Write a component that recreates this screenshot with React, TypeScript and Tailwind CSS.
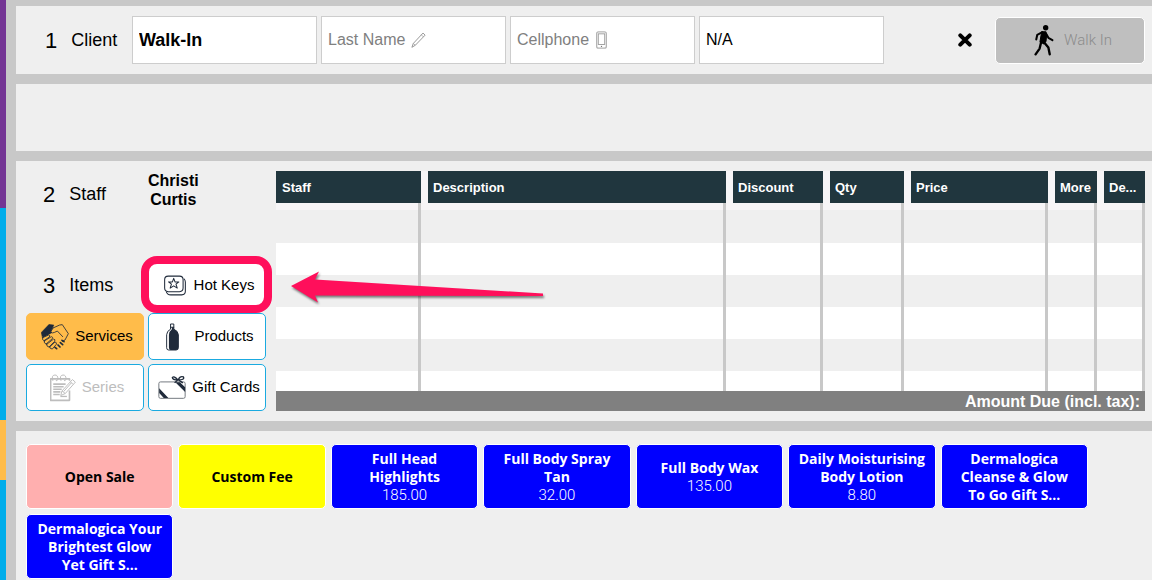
import React from "react";

type IconProps = { className?: string };

const PencilIcon = ({ className }: IconProps) => (
  <svg className={className} viewBox="0 0 42 46" fill="none" stroke="#8a8a8a" strokeWidth="2.5" strokeLinejoin="round">
    <path d="M2 44 6 33 34 3l6 6L12 38Z" />
    <path d="M6 33l6 5M29 8l6 6" strokeWidth="1.8" />
  </svg>
);

const PhoneIcon = ({ className }: IconProps) => (
  <svg className={className} viewBox="0 0 34 54" fill="none">
    <rect x="2" y="2" width="30" height="50" rx="6" stroke="#b4b4b4" strokeWidth="4" />
    <rect x="7" y="8" width="20" height="33" stroke="#8f8f8f" strokeWidth="2.5" />
    <circle cx="17" cy="47" r="2" fill="#777" />
  </svg>
);

const WalkIcon = ({ className }: IconProps) => (
  <svg className={className} viewBox="0 0 58 92" fill="none" stroke="#000" strokeLinecap="round" strokeLinejoin="round">
    <circle cx="34" cy="8" r="8" fill="#000" stroke="none" />
    <path d="M22 20h12l3 8-2 20-7 8-11-6 3-18Z" fill="#000" strokeWidth="3" />
    <path d="M24 21 9 29 6 43" strokeWidth="6" />
    <path d="M35 25l7 13 12 7" strokeWidth="6" />
    <path d="M21 49 16 70 4 87" strokeWidth="7" />
    <path d="M29 51l13 16 4 20" strokeWidth="7" />
  </svg>
);

const HotKeysIcon = ({ className }: IconProps) => (
  <svg className={className} viewBox="0 0 68 62" fill="none" stroke="#1f2a3a" strokeWidth="3.2" strokeLinejoin="round">
    <rect x="2" y="2" width="57" height="48" rx="11" />
    <path d="M61 10q5 4 5 10v29q0 11-11 11H21q-11 0-14-10" />
    <path d="M30 9l4 11h12l-9 7 4 12-11-7-11 7 4-12-9-7h12Z" />
  </svg>
);

const HandshakeIcon = ({ className }: IconProps) => (
  <svg className={className} viewBox="0 0 84 78" fill="none" stroke="#1f2a3a" strokeWidth="2.5" strokeLinejoin="round" strokeLinecap="round">
    <path d="M0 26 24 1l15 2-10 20 4 3-14 8-14 7Z" fill="#1f2a3a" strokeWidth="1" />
    <path d="M36 12 56 3l8-1 18 27-10 19-8 4" />
    <path d="M36 12 29 24q5 5 12 1l8-4 16 17" />
    <path d="M5 41 23 33q6 1 2 6L9 50q-7-2-4-9Z" fill="#ffbc4a" />
    <path d="M10 51 31 38q6 1 3 6L15 60q-7-2-5-9Z" fill="#ffbc4a" />
    <path d="M17 61 38 45q6 1 3 7L24 69q-8-1-7-8Z" fill="#ffbc4a" />
    <path d="M26 69 42 54q6 1 4 7L34 75q-8 0-8-6Z" fill="#ffbc4a" />
    <path d="M42 70l5 4M51 63l6 6M58 56l7 6M63 49l6 4" strokeWidth="5" />
  </svg>
);

const BottleIcon = ({ className }: IconProps) => (
  <svg className={className} viewBox="0 0 40 84" fill="none" stroke="#1f2a3a" strokeWidth="3">
    <path d="M14 2h10v16q13 5 14 17v40q0 7-7 7H8q-6 0-6-7V35q1-12 12-17Z" fill="#fff" />
    <path d="M18 12h6v6q13 5 14 17v40q0 7-7 7H14q-5-1-5-7V35q1-11 9-17Z" fill="#1f2a3a" stroke="none" />
    <path d="M13 12h12" />
  </svg>
);

const NotesIcon = ({ className }: IconProps) => (
  <svg className={className} viewBox="0 0 80 84" fill="none" stroke="#bdbdbd" strokeWidth="3" strokeLinejoin="round">
    <path d="M60 50v30H2V14h58v6" strokeWidth="5" />
    <path d="M9 20q-6-17 6-18 10 0 9 13-2 7-6 4M34 20q-6-17 6-18 10 0 9 13-2 7-6 4" />
    <path d="M10 30h38M10 38h32M10 46h26M10 54h22M10 62h20" strokeWidth="5" />
    <path d="M69 16l9 8-31 35-14 6 4-14Z" fill="#fff" />
    <path d="M63 23l8 8M37 51l10 8M42 53l24-27" />
    <path d="M32 68h20" strokeWidth="4" />
  </svg>
);

const GiftCardIcon = ({ className }: IconProps) => (
  <svg className={className} viewBox="0 0 84 70" fill="none">
    <rect x="2" y="18" width="80" height="50" rx="5" stroke="#74797f" strokeWidth="3" />
    <path d="M3 37v15l14 15h14ZM52 19h14l16 15v15Z" fill="#1f2a3a" />
    <path d="M60 12Q44 12 43 5q5-7 17 7ZM61 12q4-13 16-9 4 9-16 9Z" stroke="#1f2a3a" strokeWidth="4" />
    <path d="M59 12l-9 9M62 12l13 9" stroke="#1f2a3a" strokeWidth="4" />
  </svg>
);

const columns = [
  { label: "Staff", width: "w-[145px]" },
  { label: "Description", width: "" },
  { label: "Discount", width: "w-[97px]" },
  { label: "Qty", width: "w-[81px]" },
  { label: "Price", width: "w-[144px]" },
  { label: "More", width: "w-[49px]" },
  { label: "De...", width: "w-[48px]" },
];

// striped empty rows, the last one is cut off by the total bar
const rows = [
  "h-[7px] bg-[#f6f5f7]",
  "h-[33px] bg-[#efefef]",
  "h-8 bg-white",
  "h-8 bg-[#efefef]",
  "h-8 bg-white",
  "h-8 bg-[#efefef]",
  "h-5 bg-white",
];

const hotKeys = [
  { name: "Open Sale", color: "bg-[#ffafaf] text-black" },
  { name: "Custom Fee", color: "bg-[#ffff00] text-black" },
  { name: "Full Head\nHighlights", price: "185.00", color: "bg-[#0000ff] text-white" },
  { name: "Full Body Spray\nTan", price: "32.00", color: "bg-[#0000ff] text-white" },
  { name: "Full Body Wax", price: "135.00", color: "bg-[#0000ff] text-white" },
  { name: "Daily Moisturising\nBody Lotion", price: "8.80", color: "bg-[#0000ff] text-white" },
  { name: "Dermalogica\nCleanse & Glow\nTo Go Gift S...", color: "bg-[#0000ff] text-white" },
  { name: "Dermalogica Your\nBrightest Glow\nYet Gift S...", color: "bg-[#0000ff] text-white" },
];

const field = "h-12 w-full min-w-0 border border-[#cdcdcd] bg-white px-1.5 outline-none";
const itemButton = "flex h-[47px] w-full items-center justify-center rounded-[5px] border pl-1 text-[15px]";

function StepLabel({ step, text }: { step: number; text: string }) {
  return (
    <div className="flex items-center gap-3.5 pl-[17px]">
      <span className="text-[22px]">{step}</span>
      <span className="text-lg">{text}</span>
    </div>
  );
}

function ClientBar() {
  return (
    <section className="flex h-[68px] items-center bg-[#efefef]">
      <div className="flex w-[116px] shrink-0 items-center gap-3.5 pl-[29px]">
        <span className="text-[22px]">1</span>
        <span className="text-lg">Client</span>
      </div>
      <div className="grid flex-1 grid-cols-4 gap-1">
        <input aria-label="First name" defaultValue="Walk-In" className={`${field} text-lg font-bold`} />
        <div className="relative">
          <input aria-label="Last name" placeholder="Last Name" className={`${field} text-base placeholder:text-[#808080]`} />
          <PencilIcon className="pointer-events-none absolute top-4 left-[90px] h-4 w-[15px]" />
        </div>
        <div className="relative">
          <input aria-label="Cellphone" placeholder="Cellphone" className={`${field} text-base placeholder:text-[#808080]`} />
          <PhoneIcon className="pointer-events-none absolute top-[15px] left-[86px] h-[18px] w-[11px]" />
        </div>
        <input aria-label="Membership" defaultValue="N/A" className={`${field} text-base`} />
      </div>
      <div className="flex w-[268px] shrink-0 items-center justify-end gap-[22px] pr-[7px]">
        <button aria-label="Clear client" className="p-px">
          <svg className="size-[14px]" viewBox="0 0 14 14" stroke="#000" strokeWidth="4" strokeLinecap="round">
            <path d="M2.3 2.3l9.4 9.4M11.7 2.3l-9.4 9.4" />
          </svg>
        </button>
        <button disabled className="flex h-[47px] w-[150px] items-center justify-center gap-2.5 rounded-[5px] border border-white bg-[#bfbfbf] pl-1.5 font-[Roboto] text-[15px] font-light text-[#8c8c8c]">
          <WalkIcon className="h-[31px] w-5" />
          Walk In
        </button>
      </div>
    </section>
  );
}

function ItemsMenu() {
  return (
    <div className="flex w-60 shrink-0 flex-col justify-between">
      <div className="grid grid-cols-2 gap-1">
        <div className="flex h-[46px] items-center">
          <StepLabel step={2} text="Staff" />
        </div>
        <button className="h-[38px] w-fit text-center text-base leading-[19px] font-bold">
          Christi
          <br />
          Curtis
        </button>
      </div>
      <div className="grid grid-cols-2 gap-1">
        <div className="flex h-[46px] items-center">
          <StepLabel step={3} text="Items" />
        </div>
        <div className="relative z-10">
          <button className={`${itemButton} gap-2 border-[#1aaae0] bg-white`}>
            <HotKeysIcon className="h-[21px] w-[22px]" />
            Hot Keys
          </button>
          {/* highlight ring and arrow pointing at the button */}
          <div className="pointer-events-none absolute -top-[6px] -right-[6px] -bottom-[4px] -left-[7px] rounded-2xl border-8 border-[#ff0f5b]" />
          <svg className="pointer-events-none absolute top-2 left-[142px] h-10 w-[258px] drop-shadow-[1px_2px_1px_rgba(0,0,0,0.5)]" viewBox="0 0 258 40">
            <path d="M1 16 29 1.500 25 9.500 253 23.500V26L25 25.500 28 32.500Z" fill="#ff0f5b" />
          </svg>
        </div>
        <button className={`${itemButton} gap-1.5 border-[#ffbc4a] bg-[#ffbc4a]`}>
          <HandshakeIcon className="h-[26px] w-7" />
          Services
        </button>
        <button className={`${itemButton} gap-2 border-[#1aaae0] bg-white`}>
          <span className="flex w-[22px]">
            <BottleIcon className="ml-0.5 h-7 w-[13px]" />
          </span>
          Products
        </button>
        <button disabled className={`${itemButton} gap-1.5 border-[#1aaae0] bg-white text-[#bdbdbd]`}>
          <NotesIcon className="h-7 w-[26px]" />
          Series
        </button>
        <button className={`${itemButton} gap-1.5 border-[#1aaae0] bg-white`}>
          <GiftCardIcon className="h-[23px] w-7" />
          Gift Cards
        </button>
      </div>
    </div>
  );
}

function SaleTable() {
  return (
    <table className="flex-1 table-fixed border-separate border-spacing-0">
      <thead>
        <tr className="h-8 bg-[#f6f5f7]">
          {columns.map((col) => (
            <th
              key={col.label}
              className={`${col.width} border-l-[7px] border-[#f6f5f7] bg-[#20363e] bg-clip-padding p-0 pt-0.5 pl-[5px] text-left text-[13px] text-white first:border-l-0 first:pl-1.5`}
            >
              {col.label}
            </th>
          ))}
        </tr>
      </thead>
      <tbody>
        {rows.map((row, i) => (
          <tr key={i} className={row}>
            {columns.map((col) => (
              <td key={col.label} className="border-r-[3px] border-[#c8c8c8] p-0" />
            ))}
          </tr>
        ))}
      </tbody>
      <tfoot>
        <tr className="h-5 bg-[#808080]">
          <td colSpan={7} className="p-0 pt-0.5 pr-[5px] text-right text-base leading-[18px] font-bold text-white">
            Amount Due (incl. tax):
          </td>
        </tr>
      </tfoot>
    </table>
  );
}

export default function App() {
  return (
    <div className="flex min-h-screen bg-[#c8c8c8] font-['Liberation_Sans',Arial,sans-serif] text-black">
      {/* coloured edge of the side menu */}
      <div className="flex w-1.5 shrink-0 flex-col bg-[#00adea]">
        <div className="h-52 bg-[#743494]" />
        <div className="mt-[212px] h-15 bg-[#ffbc4a]" />
      </div>

      <main className="flex min-w-0 flex-1 flex-col gap-2.5 pt-1.5 pl-2.5">
        <ClientBar />
        <section className="h-[67px] bg-[#efefef]" />
        <section className="flex gap-2.5 bg-[#efefef] py-2.5 pr-[7px] pl-2.5">
          <ItemsMenu />
          <SaleTable />
        </section>
        <section className="flex-1 bg-[#efefef] pt-[13px] pl-2.5">
          <div className="grid max-w-[1062px] grid-cols-7 gap-[5px]">
            {hotKeys.map((key) => (
              <button
                key={key.name}
                className={`${key.color} flex h-[65px] flex-col items-center justify-center rounded-[5px] border border-white text-[15px] leading-[18px]`}
              >
                <span className="font-['Open_Sans',sans-serif] text-[14px] font-bold whitespace-pre-line">{key.name}</span>
                {key.price && <span className="font-[Roboto] font-light">{key.price}</span>}
              </button>
            ))}
          </div>
        </section>
      </main>
    </div>
  );
}
